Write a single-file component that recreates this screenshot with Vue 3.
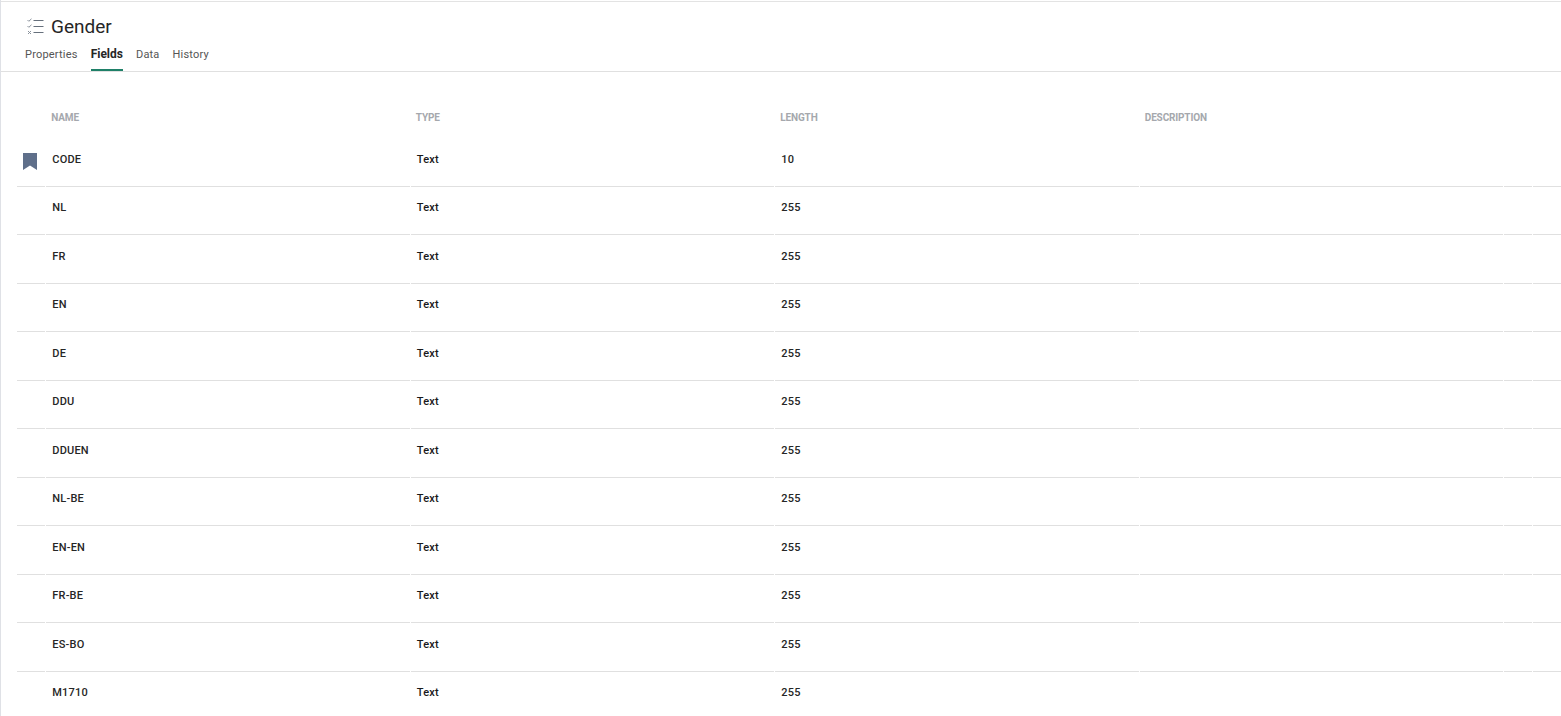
<template>
  <div class="page">
    <header class="header">
      <div class="title-row">
        <svg class="title-icon" width="18" height="18" viewBox="0 0 18 18" fill="none">
          <path d="M0.5 3l1.3 1.3L4.5 1.8M0.5 9l1.3 1.3L4.5 7.8M1 14l3 3M4 14l-3 3" stroke="#8a929c" stroke-width="1" />
          <path d="M6.5 3.5h10M6.5 9.5h10M6.5 15.5h10" stroke="#66707c" stroke-width="1" />
        </svg>
        <h1 class="title">Gender</h1>
      </div>
      <nav class="tabs">
        <a v-for="tab in tabs" :key="tab" :class="['tab', { active: tab === 'Fields' }]">{{ tab }}</a>
      </nav>
    </header>

    <table class="fields">
      <colgroup>
        <col class="col-key" />
        <col class="col-text" />
        <col class="col-text" />
        <col class="col-text" />
        <col class="col-text" />
        <col class="col-key" />
        <col class="col-key" />
      </colgroup>
      <thead>
        <tr>
          <th></th>
          <th>NAME</th>
          <th>TYPE</th>
          <th>LENGTH</th>
          <th>DESCRIPTION</th>
          <th></th>
          <th></th>
        </tr>
      </thead>
      <tbody>
        <tr v-for="(field, index) in fields" :key="field.name">
          <td class="key">
            <svg v-if="index === 0" width="14" height="17" viewBox="0 0 14 17">
              <path d="M0 0h14v17l-7-4.6L0 17z" fill="#5f6f8a" />
            </svg>
          </td>
          <td>{{ field.name }}</td>
          <td class="type">{{ field.type }}</td>
          <td>{{ field.length }}</td>
          <td></td>
          <td></td>
          <td></td>
        </tr>
      </tbody>
    </table>
  </div>
</template>

<script setup>
const tabs = ['Properties', 'Fields', 'Data', 'History']

const names = ['NL', 'FR', 'EN', 'DE', 'DDU', 'DDUEN', 'NL-BE', 'EN-EN', 'FR-BE', 'ES-BO', 'M1710']

const fields = [
  { name: 'CODE', type: 'Text', length: 10 },
  ...names.map((name) => ({ name, type: 'Text', length: 255 }))
]
</script>

<style>
html, body {
  height: 100%;
  margin: 0;
  overflow: hidden;
  background: #fff;
}
</style>

<style scoped>
.page {
  height: 716px;
  box-sizing: border-box;
  overflow: hidden;
  padding-top: 1px;
  border-left: 1px solid #dfe1e6;
  font-family: Roboto, "Liberation Sans", sans-serif;
  color: #262626;
}

.header {
  height: 71px;
  box-sizing: border-box;
  padding: 12px 0 0 24px;
  border-top: 1px solid #e3e3e3;
  border-bottom: 1px solid #e0e0e0;
}

.title-row {
  display: flex;
  align-items: center;
  gap: 6px;
  height: 24px;
  padding-left: 2px;
}

.title {
  margin: 0;
  font-size: 19px;
  font-weight: 400;
  color: #262626;
}

.tabs {
  display: flex;
  gap: 13px;
  margin-top: 7px;
}

.tab {
  height: 26px;
  box-sizing: border-box;
  padding-top: 3px;
  font-size: 11px;
  color: #555;
  letter-spacing: 0.2px;
}

.tab.active {
  font-size: 12px;
  font-weight: 700;
  line-height: 13px;
  letter-spacing: 0;
  color: #262626;
  border-bottom: 2px solid #1f8068;
}

.fields {
  width: 1546px;
  margin: 29px 0 0 15.3px;
  table-layout: fixed;
  border-collapse: separate;
  border-spacing: 1px 0;
}

.col-key { width: 28px; }
.col-text { width: 363.5px; }

th {
  height: 32px;
  padding: 0 0 5px 5px;
  text-align: left;
  font-size: 10px;
  font-weight: 700;
  letter-spacing: -0.15px;
  color: #a5a8ad;
}

td {
  height: 42.5px;
  padding: 0 0 5px 6px;
  font-size: 11px;
  font-weight: 500;
  letter-spacing: 0.2px;
  color: #262626;
  border-bottom: 1px solid #e0e0e0;
}

.type {
  color: #1a1a1a;
}

.key {
  line-height: 0;
}

.key svg {
  margin-top: 4px;
}
</style>
